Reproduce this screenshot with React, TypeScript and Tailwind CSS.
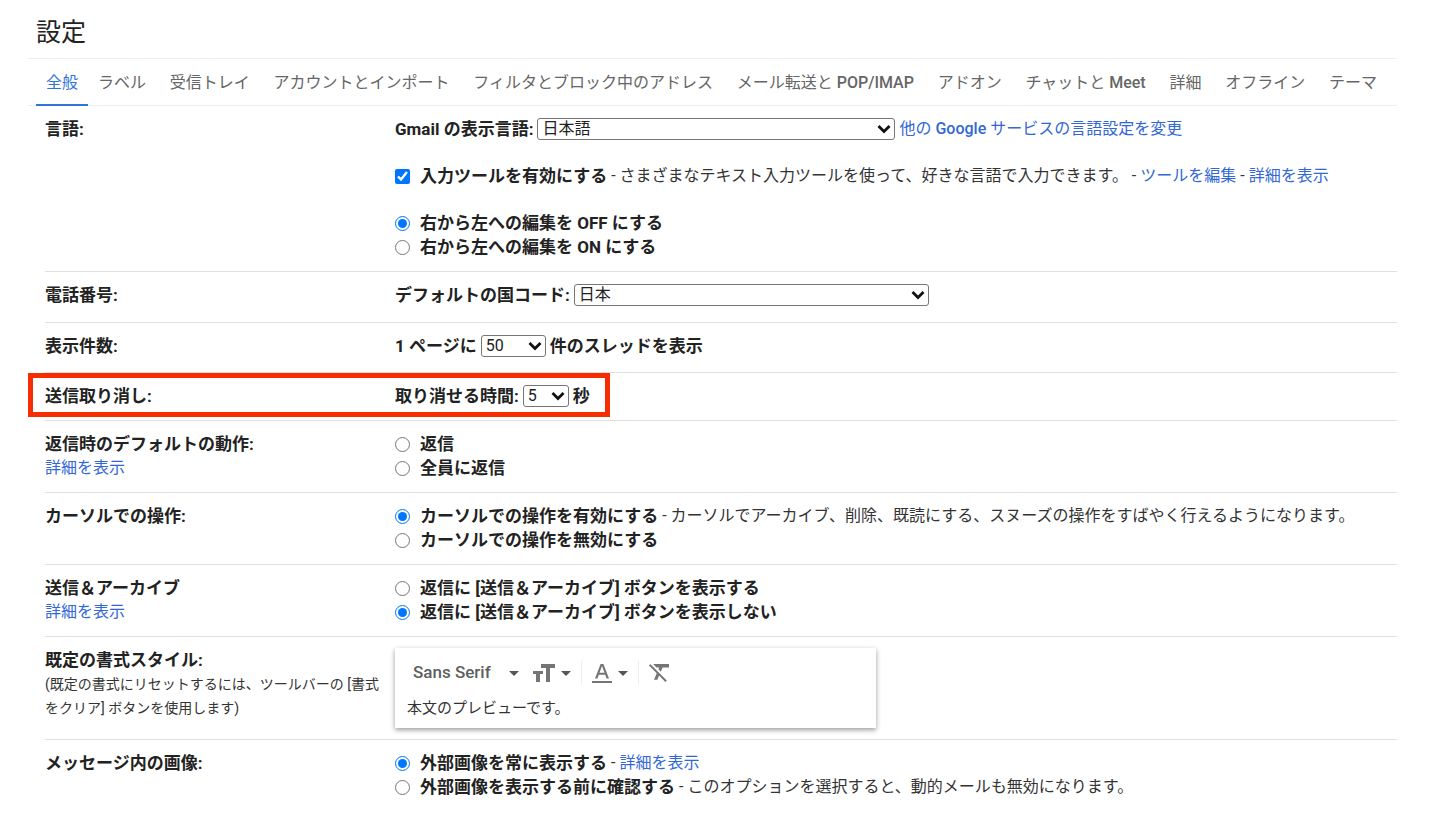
import React from 'react';

const tabs = [
  { text: 'ラベル' },
  { text: '受信トレイ' },
  { text: 'アカウントとインポート' },
  { text: 'フィルタとブロック中のアドレス' },
  { text: 'メール転送と ', latin: 'POP/IMAP' },
  { text: 'アドオン' },
  { text: 'チャットと ', latin: 'Meet' },
  { text: '詳細' },
  { text: 'オフライン' },
  { text: 'テーマ' },
];

function Link({ children }: { children: React.ReactNode }) {
  return (
    <a href="#" className="text-base leading-6 font-normal text-[#3367d6] hover:underline">
      {children}
    </a>
  );
}

type RowProps = {
  title: string;
  more?: React.ReactNode;
  className?: string;
  children: React.ReactNode;
};

function Row({ title, more, className = 'pb-3', children }: RowProps) {
  return (
    <section className={`relative ml-[17px] grid grid-cols-[350px_1fr] border-t border-[#e0e0e0] pt-[11px] first:border-t-0 ${className}`}>
      <div>
        <h2 className="text-[17px] leading-6 font-bold">{title}</h2>
        {more}
      </div>
      <div>{children}</div>
    </section>
  );
}

type SelectProps = {
  id: string;
  options: string[];
  className: string;
};

function Select({ id, options, className }: SelectProps) {
  return (
    <span className={`relative inline-flex ${className}`}>
      <select id={id} className="h-[22px] w-full appearance-none rounded-[3px] border border-[#767676] bg-white pl-1 text-base leading-5 font-normal">
        {options.map((option) => (
          <option key={option}>{option}</option>
        ))}
      </select>
      <svg viewBox="0 0 14 10" className="pointer-events-none absolute top-1.5 right-1 h-2.5 w-3.5" fill="none" stroke="#111" strokeWidth="2.8">
        <path d="M1.5 2 7 7.5 12.5 2" />
      </svg>
    </span>
  );
}

type ChoiceProps = {
  type?: 'radio' | 'checkbox';
  name: string;
  label: string;
  checked?: boolean;
  children?: React.ReactNode;
};

function Choice({ type = 'radio', name, label, checked, children }: ChoiceProps) {
  return (
    <div className="flex items-center text-base leading-6">
      <label className="flex items-center gap-2.5 text-[17px] font-bold whitespace-nowrap">
        <input type={type} name={name} defaultChecked={checked} className="size-[15px] shrink-0 accent-[#0075ff]" />
        {label}
      </label>
      {children && <span className="ml-1 whitespace-nowrap text-[#333]">{children}</span>}
    </div>
  );
}

function Caret() {
  return (
    <svg viewBox="0 0 10 5" className="h-[5px] w-2.5 text-[#555]" fill="currentColor">
      <path d="M0 0h10L5 5z" />
    </svg>
  );
}

export default function App() {
  return (
    <main lang="ja" className="bg-white pr-[35px] pl-7 font-[Roboto,'Noto_Sans_CJK_JP',sans-serif] text-[#222]">
      <h1 className="px-2 pt-3.5 pb-1.5 text-[25px] leading-[38px]">設定</h1>

      <nav className="flex border-y border-[#eeeeee] pl-2 text-base leading-6 whitespace-nowrap text-[#666]">
        <a href="#" className="-mb-px border-b-2 border-[#3074d8] px-2.5 pt-3 pb-[9px] text-[#3074d8]">
          全般
        </a>
        <div className="flex flex-1 justify-between pr-5 pl-2.5">
          {tabs.map((tab) => (
            <a key={tab.text} href="#" className="pt-3 pb-[9px]">
              {tab.text}
              {tab.latin && <span className="font-medium">{tab.latin}</span>}
            </a>
          ))}
        </div>
      </nav>

      <form>
        <Row title="言語:">
          <div className="mb-[23px] flex items-center gap-1 text-[17px] leading-6 font-bold">
            <label htmlFor="language">Gmail の表示言語:</label>
            <Select id="language" options={['日本語', 'English']} className="w-[358px]" />
            <Link>
              他の <span className="font-medium">Google</span> サービスの言語設定を変更
            </Link>
          </div>
          <div className="mb-[23px]">
            <Choice type="checkbox" name="input-tools" label="入力ツールを有効にする" checked>
              - さまざまなテキスト入力ツールを使って、好きな言語で入力できます。 - <Link>ツールを編集</Link> - <Link>詳細を表示</Link>
            </Choice>
          </div>
          <Choice name="rtl" label="右から左への編集を OFF にする" checked />
          <Choice name="rtl" label="右から左への編集を ON にする" />
        </Row>

        <Row title="電話番号:" className="pb-[15px]">
          <div className="flex items-center gap-1 text-[17px] leading-6 font-bold">
            <label htmlFor="country">デフォルトの国コード:</label>
            <Select id="country" options={['日本', 'アメリカ合衆国']} className="w-[355px]" />
          </div>
        </Row>

        <Row title="表示件数:" className="pb-3.5">
          <div className="flex items-center gap-1 text-[17px] leading-6 font-bold">
            <label htmlFor="page-size">1 ページに</label>
            <Select id="page-size" options={['50', '100']} className="w-[65px]" />
            <span>件のスレッドを表示</span>
          </div>
        </Row>

        <Row title="送信取り消し:">
          <div className="flex items-center gap-1 text-[17px] leading-6 font-bold">
            <label htmlFor="undo">取り消せる時間:</label>
            <Select id="undo" options={['5', '10', '20', '30']} className="w-[46px]" />
            <span>秒</span>
          </div>
          <div className="pointer-events-none absolute top-0 -left-[17px] h-11 w-[582px] border-5 border-[#f72c00]" />
        </Row>

        <Row title="返信時のデフォルトの動作:" more={<Link>詳細を表示</Link>}>
          <Choice name="reply" label="返信" />
          <Choice name="reply" label="全員に返信" />
        </Row>

        <Row title="カーソルでの操作:">
          <Choice name="hover" label="カーソルでの操作を有効にする" checked>
            - カーソルでアーカイブ、削除、既読にする、スヌーズの操作をすばやく行えるようになります。
          </Choice>
          <Choice name="hover" label="カーソルでの操作を無効にする" />
        </Row>

        <Row title="送信＆アーカイブ" more={<Link>詳細を表示</Link>}>
          <Choice name="archive" label="返信に [送信＆アーカイブ] ボタンを表示する" />
          <Choice name="archive" label="返信に [送信＆アーカイブ] ボタンを表示しない" checked />
        </Row>

        <Row
          title="既定の書式スタイル:"
          more={
            <p className="pr-3 text-sm leading-6 text-[#333]">
              (既定の書式にリセットするには、ツールバーの [書式をクリア] ボタンを使用します)
            </p>
          }
          className="pb-[11px]"
        >
          <div className="h-20 w-[481px] bg-white pt-3 pl-3 shadow-[0_2px_5px_rgba(0,0,0,0.4)]">
            <div className="flex h-[26px] items-center pl-1.5 text-[#757575]">
              <button type="button" className="flex items-center gap-[18px] text-[17px] font-medium text-[#5f5f5f]">
                Sans Serif
                <Caret />
              </button>
              <button type="button" aria-label="サイズ" className="ml-3.5 flex items-center gap-1.5">
                <svg viewBox="0 0 22 18" className="h-[18px] w-[22px]" fill="currentColor">
                  <path d="M8 0h14v4h-5v14h-4V4H8zM0 7h10v3H7v8H3v-8H0z" />
                </svg>
                <Caret />
              </button>
              <span className="mx-2.5 h-6 w-px bg-[#eeeeee]" />
              <button type="button" aria-label="テキストの色" className="flex items-center gap-1.5">
                <svg viewBox="0 0 20 20" className="size-5" fill="currentColor">
                  <path d="M0 18h20v2H0zM3 15.500 8.600 1h2.800L17 15.500h-2.400l-1.400-3.800H6.800L5.400 15.500zM7.500 9.700h5L10 3z" />
                </svg>
                <Caret />
              </button>
              <span className="mx-2.5 h-6 w-px bg-[#eeeeee]" />
              <button type="button" aria-label="書式をクリア">
                <svg viewBox="2 5 18 16" className="h-[18px] w-5" fill="currentColor">
                  <path d="M3.27 5L2 6.270l6.970 6.970L6.500 19h3l1.570-3.660L16.730 21 18 19.730 3.550 5.270 3.270 5zM6 5v.18L8.820 8h2.400l-.72 1.680 2.100 2.100L14.210 8H20V5H6z" />
                </svg>
              </button>
            </div>
            <p className="mt-2.5 text-[15px] leading-6 text-[#333]">本文のプレビューです。</p>
          </div>
        </Row>

        <Row title="メッセージ内の画像:">
          <Choice name="images" label="外部画像を常に表示する" checked>
            - <Link>詳細を表示</Link>
          </Choice>
          <Choice name="images" label="外部画像を表示する前に確認する">
            - このオプションを選択すると、動的メールも無効になります。
          </Choice>
        </Row>
      </form>
    </main>
  );
}
